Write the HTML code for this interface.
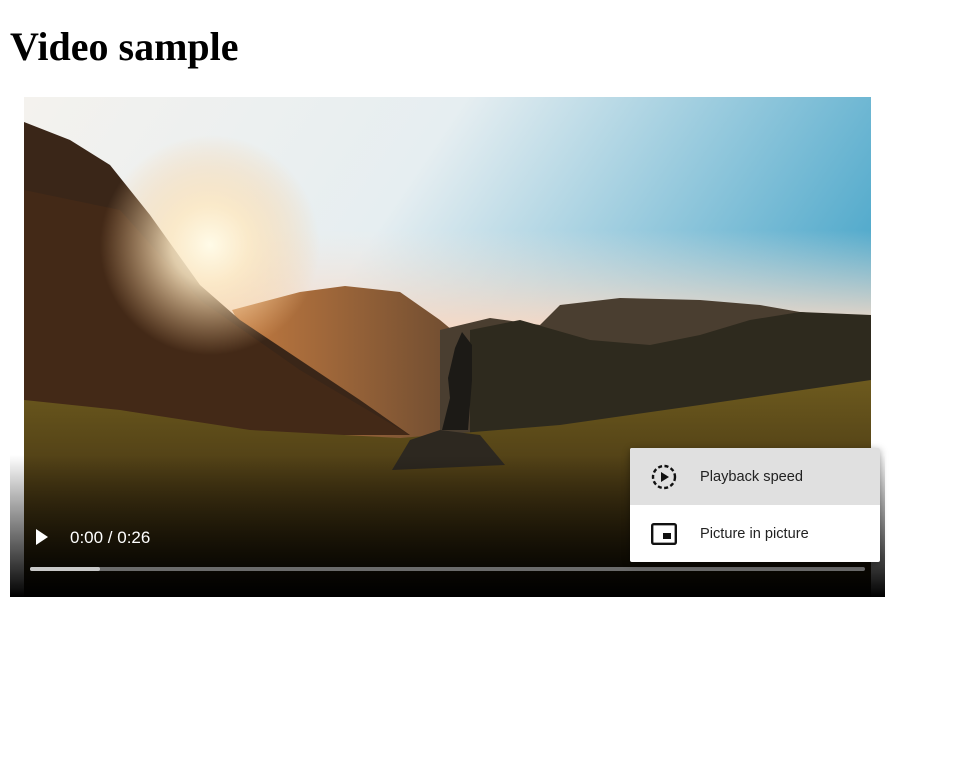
<!DOCTYPE html>
<html><head><style>
body{margin:0;background:#fff;width:980px;height:762px;overflow:hidden;position:relative;font-family:"Liberation Sans",sans-serif}
h1{position:absolute;left:10px;top:23px;margin:0;font:bold 40px "Liberation Serif",serif;color:#000}
.menu{position:absolute;left:630px;top:448px;width:250px;height:114px;background:#fff;border-radius:2px;box-shadow:0 2px 8px rgba(0,0,0,.4);overflow:hidden}
.item{height:57px;display:flex;align-items:center;font-size:14.6px;color:#222}
.item svg{margin-left:21px;margin-right:23px}
</style></head><body>
<h1>Video sample</h1>
<svg style="position:absolute;left:0;top:0" width="980" height="762">
<defs>
<linearGradient id="sky" x1="0" y1="0" x2="1" y2="0.4">
<stop offset="0" stop-color="#f4f2ee"/><stop offset="0.45" stop-color="#e6eef1"/><stop offset="1" stop-color="#47a5c9"/></linearGradient>
<linearGradient id="hz" x1="0" y1="0" x2="0" y2="1"><stop offset="0" stop-color="#f5e6dc" stop-opacity="0"/><stop offset="1" stop-color="#f6d8c4"/></linearGradient>
<radialGradient id="sun" cx="210" cy="245" r="110" gradientUnits="userSpaceOnUse"><stop offset="0" stop-color="#fffbe8"/><stop offset="0.35" stop-color="#fde9c4" stop-opacity=".85"/><stop offset="1" stop-color="#f7c890" stop-opacity="0"/></radialGradient>
<linearGradient id="grass" x1="0" y1="0" x2="0" y2="1"><stop offset="0" stop-color="#6d5a1e"/><stop offset="0.5" stop-color="#4a3a14"/><stop offset="1" stop-color="#2a200a"/></linearGradient>
<linearGradient id="fade" x1="0" y1="0" x2="0" y2="1"><stop offset="0" stop-color="#000" stop-opacity="0"/><stop offset="0.6" stop-color="#000" stop-opacity=".6"/><stop offset="1" stop-color="#000"/></linearGradient>
<linearGradient id="mid" x1="0" y1="0" x2="1" y2="0"><stop offset="0" stop-color="#c27a40"/><stop offset="1" stop-color="#6a4a30"/></linearGradient>
</defs>
<rect x="24" y="97" width="847" height="500" fill="url(#sky)"/>
<rect x="24" y="230" width="847" height="100" fill="url(#hz)"/>
<polygon points="232,310 300,292 345,286 400,292 440,320 470,345 470,440 300,440" fill="url(#mid)"/>
<polygon points="440,330 490,318 540,325 560,305 620,298 700,300 760,305 800,312 871,318 871,440 440,440" fill="#4a3e30"/>
<polygon points="470,330 520,320 590,340 650,345 700,335 750,320 800,312 871,315 871,440 470,440" fill="#2e2a1e"/>
<polygon points="24,122 70,140 110,165 150,215 200,285 240,320 300,360 360,400 410,435 24,435" fill="#3a2618"/>
<polygon points="24,190 120,210 200,300 300,370 410,435 24,435" fill="#4a2c18" opacity=".6"/>
<rect x="24" y="97" width="847" height="400" fill="url(#sun)"/>
<polygon points="24,400 120,410 250,430 400,438 560,425 700,405 871,380 871,597 24,597" fill="url(#grass)"/>
<polygon points="392,470 410,440 440,430 480,435 505,465" fill="#2d2820"/>
<path d="M442,430 L450,398 L448,378 L455,348 L462,332 L472,345 L472,380 L468,430 Z" fill="#1c1a16"/>
<rect x="10" y="455" width="875" height="142" fill="url(#fade)"/>
<polygon points="36,529 48,537 36,545" fill="#fff"/>
<text x="70" y="543" fill="#fff" font-family="Liberation Sans" font-size="17">0:00 / 0:26</text>
<rect x="30" y="567" width="835" height="4" rx="2" fill="#6b6b6b"/>
<rect x="30" y="567" width="70" height="4" rx="2" fill="#c8c8c8"/>
</svg>
<div class="menu">
<div class="item" style="background:#e0e0e0"><svg width="26" height="26" viewBox="0 0 26 26"><circle cx="13" cy="13" r="11" fill="none" stroke="#111" stroke-width="2.4" stroke-dasharray="4 2.5"/><polygon points="10,8 18,13 10,18" fill="#111"/></svg>Playback speed</div>
<div class="item"><svg width="26" height="22" viewBox="0 0 26 22"><rect x="1.2" y="1.2" width="23.6" height="19.6" rx="1.5" fill="none" stroke="#111" stroke-width="2.4"/><rect x="12" y="10" width="8" height="6" fill="#111"/></svg>Picture in picture</div>
</div>
</body></html>
